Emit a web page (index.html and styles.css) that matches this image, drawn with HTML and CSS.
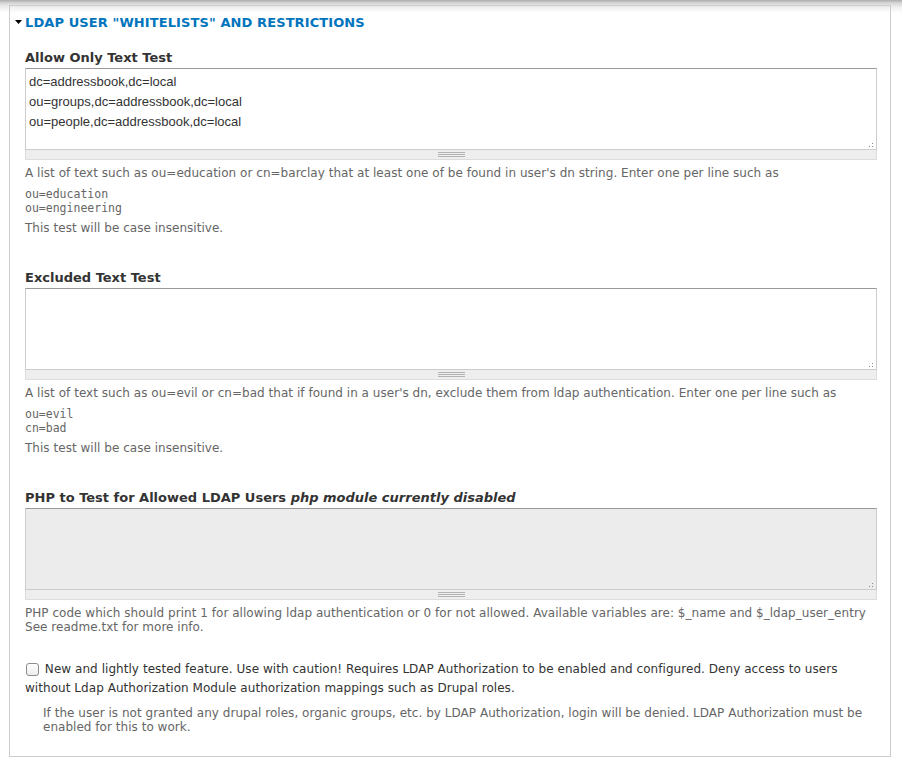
FILE: index.html
```html
<!DOCTYPE html>
<html lang="en">
<head>
    <meta charset="UTF-8">
    <meta name="viewport" content="width=device-width, initial-scale=1.0">
    <title>LDAP User Restrictions</title>
    <link rel="stylesheet" href="styles.css">
</head>
<body>
    <div class="fieldset">
        <div class="legend">
            <svg class="arrow" width="7" height="4" viewBox="0 0 7 4"><path d="M0 0h7L3.5 4z" fill="#000"/></svg><a href="#">LDAP User "Whitelists" and Restrictions</a>
        </div>

        <div class="form-item">
            <label for="allowOnly">Allow Only Text Test</label>
            <div class="resizable">
                <textarea id="allowOnly" rows="4">dc=addressbook,dc=local
ou=groups,dc=addressbook,dc=local
ou=people,dc=addressbook,dc=local</textarea>
                <div class="grippie"><span></span></div>
            </div>
            <div class="description">
                A list of text such as ou=education or cn=barclay that at least one of be found in user's dn string. Enter one per line such as
                <pre>ou=education
ou=engineering</pre>
                This test will be case insensitive.
            </div>
        </div>

        <div class="form-item">
            <label for="excluded">Excluded Text Test</label>
            <div class="resizable">
                <textarea id="excluded" rows="4"></textarea>
                <div class="grippie"><span></span></div>
            </div>
            <div class="description">
                A list of text such as ou=evil or cn=bad that if found in a user's dn, exclude them from ldap authentication. Enter one per line such as
                <pre>ou=evil
cn=bad</pre>
                This test will be case insensitive.
            </div>
        </div>

        <div class="form-item">
            <label for="phpTest">PHP to Test for Allowed LDAP Users <em>php module currently disabled</em></label>
            <div class="resizable">
                <textarea id="phpTest" rows="4" disabled></textarea>
                <div class="grippie"><span></span></div>
            </div>
            <div class="description">
                PHP code which should print 1 for allowing ldap authentication or 0 for not allowed. Available variables are: $_name and $_ldap_user_entry<br>
                See readme.txt for more info.
            </div>
        </div>

        <div class="form-item checkbox-item">
            <label class="option"><input type="checkbox" id="denyUnauth"> New and lightly tested feature. Use with caution! Requires LDAP Authorization to be enabled and configured. Deny access to users without Ldap Authorization Module authorization mappings such as Drupal roles.</label>
            <div class="description">
                If the user is not granted any drupal roles, organic groups, etc. by LDAP Authorization, login will be denied. LDAP Authorization must be enabled for this to work.
            </div>
        </div>
    </div>
</body>
</html>
```

FILE: styles.css
```css
body {
    margin: 0;
    font-family: "DejaVu Sans", Verdana, sans-serif;
    font-size: 13px;
    color: #333;
    background: #fff linear-gradient(to bottom, #acacac 0, #d6d6d6 3px, #eeeeee 7px, #fff 13px) no-repeat;
    padding-top: 5px;
}

.fieldset {
    margin: 0 11px 0 9px;
    border: 1px solid #ccc;
    padding: 8px 13px 22px 15px;
}

.legend {
    line-height: 18px;
    margin-bottom: 17px;
    margin-left: -10px;
    font-weight: bold;
    text-transform: uppercase;
    letter-spacing: 0.1px;
}

.legend .arrow {
    margin-right: 3px;
    vertical-align: 3px;
}

.legend a {
    color: #0074bd;
    text-decoration: none;
}

.form-item {
    margin-bottom: 34px;
}

.form-item label {
    display: block;
    font-weight: bold;
    line-height: 18px;
    margin-bottom: 1px;
}

.form-item label em {
    font-style: italic;
}

.resizable {
    position: relative;
}

.resizable::after {
    content: "";
    position: absolute;
    right: 4px;
    bottom: 13px;
    width: 1px;
    height: 1px;
    background: #888;
    box-shadow: -3px 0 0 #888, 0 -3px 0 #888;
}

textarea {
    display: block;
    box-sizing: border-box;
    width: 100%;
    height: 82px;
    margin: 0;
    padding: 3px;
    border: 1px solid #ccc;
    border-top-color: #999;
    font-family: "Liberation Sans", Arial, sans-serif;
    font-size: 13px;
    line-height: 20px;
    color: #333;
    background: #fff;
    resize: none;
}

textarea:disabled {
    background: #ececec;
}

.grippie {
    box-sizing: border-box;
    height: 10px;
    border: 1px solid #ddd;
    border-top: none;
    background: #eee;
    display: flex;
    justify-content: center;
    align-items: center;
}

.grippie span {
    width: 27px;
    height: 3px;
    border-top: 1px solid #b4b4b4;
    border-bottom: 1px solid #b4b4b4;
    background: linear-gradient(to bottom, transparent 1px, #b4b4b4 1px, #b4b4b4 2px, transparent 2px);
}

.description {
    margin-top: 6px;
    font-size: 12px;
    color: #666;
    letter-spacing: 0.03px;
}

.description pre {
    margin: 7px 0 6px;
    font-family: "DejaVu Sans Mono", monospace;
    font-size: 11.5px;
    line-height: 14px;
    letter-spacing: 0;
}

.checkbox-item {
    margin-top: -8px;
    margin-bottom: 0;
}

.form-item label.option {
    display: inline;
    font-weight: normal;
    font-size: 12px;
    line-height: 19px;
    letter-spacing: 0.05px;
}

input[type="checkbox"] {
    appearance: none;
    box-sizing: border-box;
    width: 13px;
    height: 13px;
    margin: 0 2px 0 1px;
    border: 1px solid #8c8c8c;
    border-radius: 3px;
    background: linear-gradient(to bottom, #fff, #ececec);
    vertical-align: -3px;
}

.checkbox-item .description {
    margin-top: 8px;
    margin-left: 18px;
}
```
